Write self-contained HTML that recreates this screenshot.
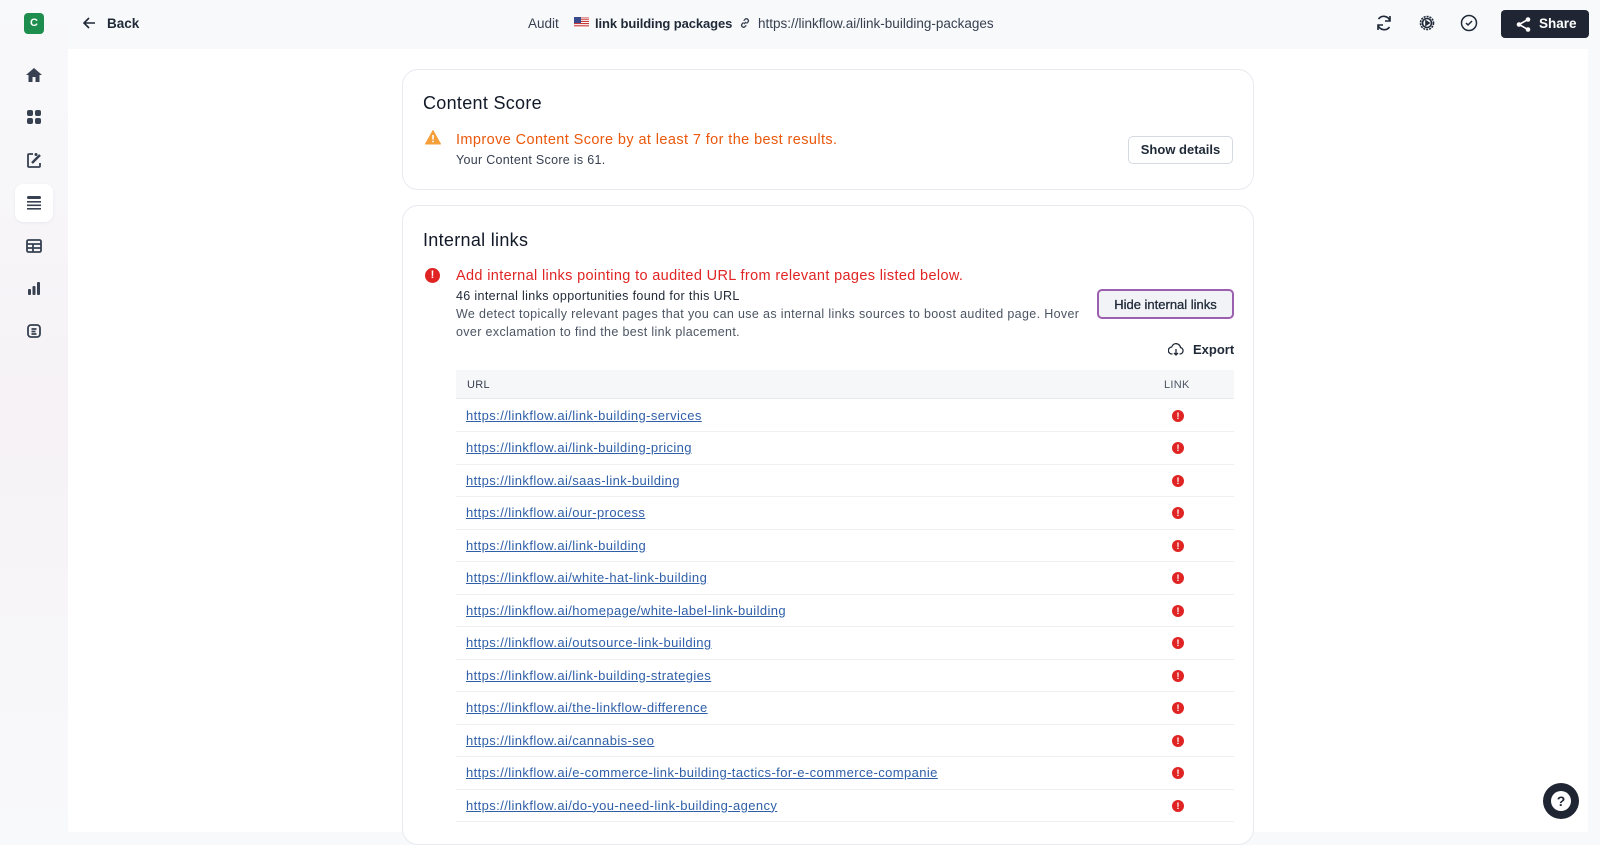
<!DOCTYPE html>
<html><head><meta charset="utf-8"><style>
*{box-sizing:border-box;margin:0;padding:0}
body{width:1600px;height:832px;overflow:hidden;font-family:"Liberation Sans",sans-serif;background:#f8f9fb;position:relative;color:#111827}
.side{position:absolute;left:0;top:0;width:68px;height:832px;background:linear-gradient(180deg,#f8f9fb 0%,#f6f2f6 50%,#f8f9fb 100%)}
.main{position:absolute;left:68px;top:49px;width:1520px;height:783px;background:#fff}
.logo{position:absolute;left:24px;top:13px;width:20px;height:21px;border-radius:4px;background:#1e8e4e;color:#fff;font-size:11px;font-weight:bold;text-align:center;line-height:21px}
.si{position:absolute;left:24px;width:20px;height:20px}
.act{position:absolute;left:15px;top:184px;width:38px;height:38px;background:#fff;border-radius:8px;box-shadow:0 1px 3px rgba(0,0,0,.06)}
.t{position:absolute;white-space:nowrap}
.card{position:absolute;left:402px;width:852px;background:#fff;border:1px solid #e8eaef;border-radius:16px}
.btn{position:absolute;border:1px solid #d5d9e0;border-radius:5px;background:#fff;font-size:13px;font-weight:bold;color:#1f2937;text-align:center}
.row{position:absolute;left:456px;width:778px;height:32.5px;border-bottom:1px solid #eef0f3}
.row a{position:absolute;left:10px;top:8px;font-size:13px;letter-spacing:.4px;color:#2f5fa8;text-decoration:underline}
.dot{position:absolute;left:716px;top:10px;width:12px;height:12px;border-radius:50%;background:#e02424;color:#fff;font-size:9px;font-weight:bold;text-align:center;line-height:12px}
</style></head><body>
<div class="side"></div>
<div class="main"></div>
<div class="logo">C</div>
<div class="act"></div>
<svg class="si" style="top:65px" viewBox="0 0 20 20"><path d="M10 3L2 10h2.5v7h4v-5h3v5h4v-7H18z" fill="#374151"/></svg>
<svg class="si" style="top:107px" viewBox="0 0 20 20" fill="#374151"><rect x="3" y="3" width="6" height="6" rx="2"/><rect x="11" y="3" width="6" height="6" rx="2"/><rect x="3" y="11" width="6" height="6" rx="2"/><rect x="11" y="11" width="6" height="6" rx="2"/></svg>
<svg class="si" style="top:150px" viewBox="0 0 20 20" fill="none" stroke="#374151" stroke-width="1.8"><path d="M9 4H5a1 1 0 0 0-1 1v11a1 1 0 0 0 1 1h10a1 1 0 0 0 1-1v-3"/><path d="M8 13l8-8" stroke-width="2.5"/><path d="M12 3v3M10.5 4.5h3"/></svg>
<svg class="si" style="top:193px" viewBox="0 0 20 20" fill="#374151"><rect x="3" y="3" width="14" height="3" rx="1.5"/><rect x="3" y="8" width="14" height="1.6"/><rect x="3" y="11.5" width="14" height="1.6"/><rect x="3" y="15" width="14" height="1.6"/></svg>
<svg class="si" style="top:236px" viewBox="0 0 20 20" fill="none" stroke="#374151" stroke-width="1.8"><rect x="3" y="4" width="14" height="12" rx="1.5"/><path d="M3 8h14M3 12h14M9 8v8"/></svg>
<svg class="si" style="top:278px" viewBox="0 0 20 20" fill="#374151"><rect x="4" y="11" width="3" height="6" rx="1"/><rect x="8.5" y="8" width="3" height="9" rx="1"/><rect x="13" y="4" width="3" height="13" rx="1"/></svg>
<svg class="si" style="top:321px" viewBox="0 0 20 20" fill="none" stroke="#374151" stroke-width="1.8"><rect x="4" y="4" width="12" height="12" rx="3"/><path d="M7.5 8h5M7.5 10.5h4M7.5 13h5"/></svg>

<svg class="t" style="left:82px;top:16px" width="14" height="14" viewBox="0 0 14 14" fill="none" stroke="#1f2937" stroke-width="1.6"><path d="M13 7H2M7 2L2 7l5 5"/></svg>
<div class="t" style="left:107px;top:16px;font-size:13.5px;font-weight:bold;color:#1f2937">Back</div>
<div class="t" style="left:528px;top:16px;font-size:13.5px;color:#374151">Audit</div>
<svg class="t" style="left:574px;top:17px" width="15" height="11" viewBox="0 0 15 11"><rect width="15" height="11" fill="#fff"/><path d="M0 0h15M0 2.2h15M0 4.4h15M0 6.6h15M0 8.8h15" stroke="#c83a3a" stroke-width="1.1"/><rect width="7" height="6" fill="#3b4a8a"/></svg>
<div class="t" style="left:595px;top:16px;font-size:13px;font-weight:bold;color:#1f2937;letter-spacing:-.1px">link building packages</div>
<svg class="t" style="left:739px;top:17px" width="12" height="12" viewBox="0 0 12 12" fill="none" stroke="#374151" stroke-width="1.3"><path d="M5 7l2-2M4.5 5.5L3 7a2 2 0 0 0 2.8 2.8l1.5-1.5M7.5 6.5L9 5A2 2 0 0 0 6.2 2.2L4.7 3.7"/></svg>
<div class="t" style="left:758px;top:16px;font-size:13.5px;color:#374151">https://linkflow.ai/link-building-packages</div>
<svg class="t" style="left:1374px;top:13px" width="20" height="20" viewBox="0 0 20 20" fill="none" stroke="#1f2937" stroke-width="1.6"><path d="M16 8a6.5 6.5 0 0 0-11.5-2M4 12a6.5 6.5 0 0 0 11.5 2"/><path d="M16 3v5h-5M4 17v-5h5"/></svg>
<svg class="t" style="left:1417px;top:13px" width="20" height="20" viewBox="0 0 20 20" fill="none" stroke="#1f2937" stroke-width="1.6"><circle cx="10" cy="10" r="6.5" stroke-dasharray="2 1"/><circle cx="10" cy="10" r="4.5"/><path d="M9 8l3 2-3 2z" fill="#1f2937"/></svg>
<svg class="t" style="left:1459px;top:13px" width="20" height="20" viewBox="0 0 20 20" fill="none" stroke="#1f2937" stroke-width="1.5"><circle cx="10" cy="10" r="7.5"/><path d="M7 10l2 2 4-4"/></svg>
<div class="t" style="left:1501px;top:10px;width:88px;height:28px;background:#1f2533;border-radius:4px"></div>
<svg class="t" style="left:1516px;top:17px" width="15" height="15" viewBox="0 0 15 15" fill="#fff"><circle cx="12" cy="2.5" r="2.3"/><circle cx="12" cy="12.5" r="2.3"/><circle cx="3" cy="7.5" r="2.3"/><path d="M12 2.5L3 7.5l9 5" stroke="#fff" stroke-width="1.6" fill="none"/></svg>
<div class="t" style="left:1539px;top:16px;font-size:13.5px;font-weight:bold;color:#fff">Share</div>

<div class="card" style="top:69px;height:121px"></div>
<div class="t" style="left:423px;top:93px;font-size:18px;color:#111827;letter-spacing:.3px">Content Score</div>
<svg class="t" style="left:425px;top:130px" width="16" height="15" viewBox="0 0 16 15"><path d="M8 0.5L15.5 14H0.5z" fill="#f59f3a" stroke="#f59f3a" stroke-linejoin="round"/><path d="M8 5v4.5" stroke="#fff" stroke-width="1.6"/><circle cx="8" cy="11.5" r="0.9" fill="#fff"/></svg>
<div class="t" style="left:456px;top:132px;font-size:14.5px;color:#ea580c;letter-spacing:.4px">Improve Content Score by at least 7 for the best results.</div>
<div class="t" style="left:456px;top:153px;font-size:12.5px;color:#374151;letter-spacing:.3px">Your Content Score is 61.</div>
<div class="btn" style="left:1128px;top:136px;width:105px;height:28px;line-height:26px">Show details</div>

<div class="card" style="top:205px;height:640px"></div>
<div class="t" style="left:423px;top:230px;font-size:18px;color:#111827;letter-spacing:.3px">Internal links</div>
<div class="t" style="left:425px;top:268px;width:15px;height:15px;border-radius:50%;background:#e02424;color:#fff;font-size:11px;font-weight:bold;text-align:center;line-height:15px">!</div>
<div class="t" style="left:456px;top:268px;font-size:14.5px;color:#e02424;letter-spacing:.35px">Add internal links pointing to audited URL from relevant pages listed below.</div>
<div class="t" style="left:456px;top:289px;font-size:12.5px;color:#1f2937;letter-spacing:.35px">46 internal links opportunities found for this URL</div>
<div class="t" style="left:456px;top:307px;font-size:12.5px;color:#4b5563;letter-spacing:.35px">We detect topically relevant pages that you can use as internal links sources to boost audited page. Hover</div>
<div class="t" style="left:456px;top:325px;font-size:12.5px;color:#4b5563;letter-spacing:.35px">over exclamation to find the best link placement.</div>
<div class="btn" style="left:1097px;top:289px;width:137px;height:30px;line-height:27px;background:#f1f3f6;border:2px solid #9b5fb0;font-weight:normal;font-size:13px;color:#1f2937;-webkit-text-stroke:.3px #1f2937">Hide internal links</div>
<svg class="t" style="left:1168px;top:342px" width="16" height="15" viewBox="0 0 16 15" fill="none" stroke="#1f2937" stroke-width="1.3"><path d="M4.5 12H4a3.5 3.5 0 0 1-.3-7A4.5 4.5 0 0 1 12.5 5.5 3.3 3.3 0 0 1 12 12h-.5"/><path d="M8 7v6M6 11l2 2 2-2"/></svg>
<div class="t" style="left:1193px;top:342px;font-size:13px;font-weight:bold;color:#1f2937">Export</div>
<div class="t" style="left:456px;top:370px;width:778px;height:29px;background:#f6f7f9;border-bottom:1px solid #e8eaef"></div>
<div class="t" style="left:467px;top:379px;font-size:11px;color:#374151;letter-spacing:.3px">URL</div>
<div class="t" style="left:1164px;top:379px;font-size:11px;color:#4b5563;letter-spacing:.3px">LINK</div>

<div class="row" style="top:399.5px"><a>https://linkflow.ai/link-building-services</a><div class="dot">!</div></div>
<div class="row" style="top:432px"><a>https://linkflow.ai/link-building-pricing</a><div class="dot">!</div></div>
<div class="row" style="top:464.5px"><a>https://linkflow.ai/saas-link-building</a><div class="dot">!</div></div>
<div class="row" style="top:497px"><a>https://linkflow.ai/our-process</a><div class="dot">!</div></div>
<div class="row" style="top:529.5px"><a>https://linkflow.ai/link-building</a><div class="dot">!</div></div>
<div class="row" style="top:562px"><a>https://linkflow.ai/white-hat-link-building</a><div class="dot">!</div></div>
<div class="row" style="top:594.5px"><a>https://linkflow.ai/homepage/white-label-link-building</a><div class="dot">!</div></div>
<div class="row" style="top:627px"><a>https://linkflow.ai/outsource-link-building</a><div class="dot">!</div></div>
<div class="row" style="top:659.5px"><a>https://linkflow.ai/link-building-strategies</a><div class="dot">!</div></div>
<div class="row" style="top:692px"><a>https://linkflow.ai/the-linkflow-difference</a><div class="dot">!</div></div>
<div class="row" style="top:724.5px"><a>https://linkflow.ai/cannabis-seo</a><div class="dot">!</div></div>
<div class="row" style="top:757px"><a>https://linkflow.ai/e-commerce-link-building-tactics-for-e-commerce-companie</a><div class="dot">!</div></div>
<div class="row" style="top:789.5px"><a>https://linkflow.ai/do-you-need-link-building-agency</a><div class="dot">!</div></div>

<div class="t" style="left:1543px;top:783px;width:36px;height:36px;border-radius:50%;background:#1f2533"></div>
<div class="t" style="left:1551px;top:791px;width:20px;height:20px;border-radius:50%;background:#fff;color:#1f2533;font-size:14px;font-weight:bold;text-align:center;line-height:20px">?</div>
</body></html>
